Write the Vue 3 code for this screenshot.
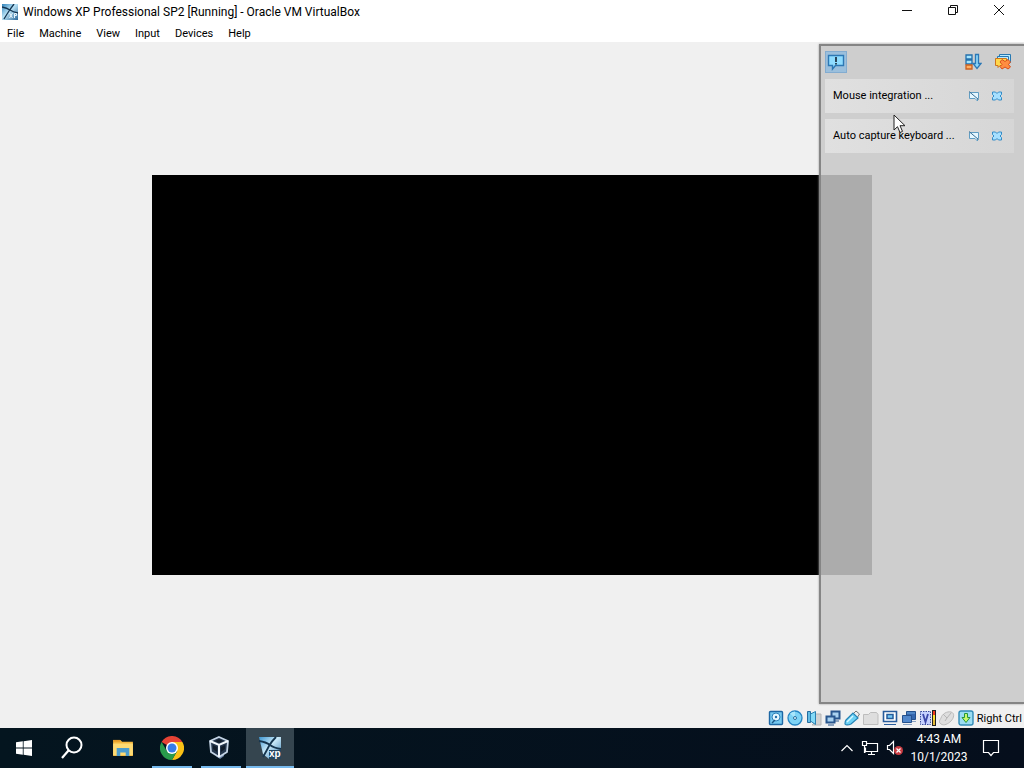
<script setup>
const menus = ['File', 'Machine', 'View', 'Input', 'Devices', 'Help']
const messages = ['Mouse integration ...', 'Auto capture keyboard ...']
</script>

<template>
  <div class="desktop">
    <header class="titlebar">
      <svg class="app-icon" viewBox="0 0 16 16" aria-hidden="true">
        <defs>
          <linearGradient id="tg" x1="0" y1="0" x2="1" y2="1">
            <stop offset="0" stop-color="#2f82bb" /><stop offset=".45" stop-color="#b9e2f5" /><stop offset="1" stop-color="#2a6698" />
          </linearGradient>
        </defs>
        <rect width="16" height="16" fill="url(#tg)" />
        <path d="M0 3Q5 4 8 6T16 9M12 0Q9 4 7 7T2 15" stroke="#12324f" stroke-width="1.300" fill="none" />
        <path d="M7.500 9l3 5M10.500 9l-3 5M12.500 14V9.500h2v2h-2" stroke="#e8f4fc" fill="none" />
      </svg>
      <h1>Windows XP Professional SP2 [Running] - Oracle VM VirtualBox</h1>
      <div class="window-buttons">
        <button aria-label="Minimize"><svg viewBox="0 0 12 12"><path d="M1 6.500h10" /></svg></button>
        <button aria-label="Restore"><svg viewBox="0 0 12 12"><path d="M1.500 3.500h7v7h-7zM3.500 3.500v-2h7v7h-2" /></svg></button>
        <button aria-label="Close"><svg viewBox="0 0 12 12"><path d="M1 1l10 10M11 1L1 11" /></svg></button>
      </div>
    </header>
    <nav class="menubar">
      <button v-for="m in menus" :key="m">{{ m }}</button>
    </nav>

    <main class="stage">
      <div class="guest-screen"></div>
      <aside class="panel">
        <div class="panel-tools">
          <button class="toggle" aria-label="Notifications">
            <svg width="18" height="18" viewBox="0 0 18 18">
              <path d="M1.500 2.500h15v10H8.500l-3 3.500v-3.500h-4z" fill="#8fdcff" stroke="#2d78b4" stroke-width="1.400" />
              <path d="M9 4v5M9 10v1.500" stroke="#123" stroke-width="1.600" />
            </svg>
          </button>
          <button class="tool" aria-label="Sort">
            <svg width="18" height="18" viewBox="0 0 18 18">
              <path d="M2 2h6v4H2zM2 7h6v4H2z" fill="#a5e6ff" stroke="#2470ac" stroke-width="1.300" />
              <path d="M2 12h6v4H2z" fill="#ffb062" stroke="#cc6020" stroke-width="1.300" />
              <path d="M11.500 1.500h3v9h2.500l-4 5-4-5h2.500z" fill="#8ed8fa" stroke="#2b78b6" stroke-width="1.300" />
            </svg>
          </button>
          <button class="tool" aria-label="Delete all">
            <svg width="18" height="18" viewBox="0 0 18 18">
              <path d="M5.500 5V1.500h11v8h-2" fill="#b7eaff" stroke="#2778b1" />
              <path d="M3.500 6V3.500h11v8h-2" fill="#b7eaff" stroke="#2778b1" />
              <path d="M1.500 5.500h11v7H6l-2 2v-2H1.500z" fill="#ffd84c" stroke="#cf741b" />
              <path d="M8 6.500l3 2 3-2 2.500 2.500-2 2.500 2 2.500L14 16l-3-2-3 2-2-2.500 2-2-2-2.500z" fill="#ff8d41" stroke="#d9501b" />
            </svg>
          </button>
        </div>
        <ul class="messages">
          <li v-for="m in messages" :key="m">
            <span>{{ m }}</span>
            <button :aria-label="'Mute ' + m">
              <svg width="12" height="12" viewBox="0 0 12 12">
                <path d="M1.500 2.500h9v6h-1v2.500L7 8.500H1.500z" fill="#e4f6ff" stroke="#5f9cc2" />
                <path d="M1 1.500l9.500 8" stroke="#386f95" />
              </svg>
            </button>
            <button :aria-label="'Close ' + m">
              <svg width="12" height="12" viewBox="0 0 12 12">
                <path d="M1.500 2h3L6 3.500 7.500 2h3v2.500L9 6l1.500 1.500V10h-3L6 8.500 4.500 10h-3V7.500L3 6 1.500 4.500z" fill="#a6e0ff" stroke="#348cc7" />
              </svg>
            </button>
          </li>
        </ul>
      </aside>
      <svg class="pointer" width="13" height="20" viewBox="0 0 13 20" aria-hidden="true">
        <path d="M1 1v15l3.500-3.300L7 18.500l2.500-1.100L7 11.700h5z" fill="#fff" stroke="#222" />
      </svg>
    </main>

    <footer class="statusbar">
      <svg viewBox="0 0 16 16">
        <rect x="1.500" y="1.500" width="13" height="13" rx="1" fill="#75c9f0" stroke="#1d67a4" stroke-width="1.400" />
        <circle cx="8" cy="7" r="4" fill="#e5f8ff" stroke="#2f83bb" /><circle cx="8" cy="7" r="1.200" fill="#246fa9" />
        <path d="M4 13l3-3" stroke="#195787" stroke-width="1.500" />
      </svg>
      <svg viewBox="0 0 16 16">
        <circle cx="8" cy="8" r="7" fill="#7dd3f5" stroke="#2484c2" stroke-width="1.300" /><path d="M8 8L3 3.500A7 7 0 0 1 8 1.500z" fill="#a8e6fb" />
        <circle cx="8" cy="8" r="1.500" fill="#e8f9ff" stroke="#266f9f" />
      </svg>
      <svg viewBox="0 0 16 16">
        <path d="M9 4h6v11H6l3-3z" fill="#d2d2d2" stroke="#b6b6b6" />
        <path d="M1.500 1.500h3v11h-3z" fill="#62bce4" stroke="#246c9f" /><path d="M4.500 4l5-2.500v13l-5-3.500z" fill="#84daf7" stroke="#2a80b1" />
      </svg>
      <svg viewBox="0 0 16 16">
        <path d="M6.500 1.500h8v7h-8z" fill="#a9d2f0" stroke="#28568e" stroke-width="2" /><path d="M9 11h5" stroke="#28568e" />
        <path d="M1.500 6.500h8v6h-8z" fill="#a9d2f0" stroke="#28568e" stroke-width="2" /><path d="M3 15h6" stroke="#28568e" />
      </svg>
      <svg viewBox="0 0 16 16">
        <path d="M9 4l3-3 3.500 3L13 8z" fill="#eee" stroke="#777" />
        <path d="M2 10l7-7 5 5-7 6C4 15.500 1 15 1 14s0-3 1-4z" fill="#6bd0f4" stroke="#2583b5" stroke-width="1.200" /><path d="M3 12l6-6" stroke="#d6f7ff" stroke-width="1.500" />
      </svg>
      <svg viewBox="0 0 16 16"><path d="M.5 4.500h5l2-2h6l1.500 2v10H.5z" fill="#dedede" stroke="#bdbdbd" /></svg>
      <svg viewBox="0 0 16 16">
        <path d="M1.500 1.500h13v10h-13z" fill="#fff" stroke="#285c9c" stroke-width="1.600" /><path d="M5 4.500h6v4H5z" fill="#77c8f3" stroke="#245b9b" stroke-width="1.500" /><path d="M2 14.500h12" stroke="#285c9c" />
      </svg>
      <svg viewBox="0 0 16 16">
        <path d="M5.500 1.500h9v8h-9z" fill="#3567ae" stroke="#24508c" /><path d="M1.500 5.500h9v7h-9z" fill="#5187cb" stroke="#24508c" /><path d="M2 14.500h9M11 11.500h4" stroke="#8aa2c1" /><path d="M6 3h8" stroke="#6da8df" />
      </svg>
      <svg viewBox="0 0 16 16">
        <path d="M.5 1.500h10v13H.5z" fill="#c5d1ff" stroke="#394d9e" stroke-dasharray="1.500 1" /><path d="M3 4l2.500 8L8 4" stroke="#3b47a8" stroke-width="1.800" fill="none" />
        <path d="M12 0h4v16h-4z" fill="#222" /><path d="M13 1h2v4h-2z" fill="#f23a20" /><path d="M13 5h2v5h-2z" fill="#ffe22e" /><path d="M13 10h2v5h-2z" fill="#e2ba38" />
      </svg>
      <svg viewBox="0 0 16 16">
        <path d="M2 8c1-4 6-7 10-6 4 1 3 6 0 9s-7 5-10 3-1-4 0-6z" fill="#dedede" stroke="#bbb" /><path d="M4 4l4 4 4-5M8 8l-2 3" stroke="#b5b5b5" fill="none" />
      </svg>
      <svg viewBox="0 0 16 16">
        <rect x="1" y="1" width="14" height="14" rx="2" fill="#9bdcf2" stroke="#328ab6" stroke-width="1.400" /><path d="M6.500 3.500h3v4H12l-4 5-4-5h2.500z" fill="#c9f76a" stroke="#24963a" />
      </svg>
      <span>Right Ctrl</span>
    </footer>

    <div class="taskbar">
      <button class="task" aria-label="Start">
        <svg width="16" height="16" viewBox="0 0 16 16"><path d="M0 2.300L6.800 1.300v6.200H0zM7.600 1.200L16 0v7.500H7.600zM0 8.400h6.800v6.300L0 13.700zM7.600 8.400H16V16l-8.400-1.200z" fill="#fff" /></svg>
      </button>
      <button class="task" aria-label="Search">
        <svg width="24" height="24" viewBox="0 0 24 24"><circle cx="14" cy="9" r="7.500" fill="none" stroke="#fff" stroke-width="2" /><path d="M8.500 14.500L2 22" stroke="#fff" stroke-width="2.200" /></svg>
      </button>
      <button class="task explorer" aria-label="File Explorer">
        <svg width="22" height="18" viewBox="0 0 24 20"><path d="M1 1h8l2 2h12v16H1z" fill="#f5b83e" /><path d="M1 5h22v13H1z" fill="#ffdb73" /><path d="M5 10h14v9h-4v-4H9v4H5z" fill="#4d9dce" /><path d="M1 1h8v2H1z" fill="#e49a27" /></svg>
      </button>
      <button class="task open" aria-label="Chrome">
        <svg width="24" height="24" viewBox="0 0 24 24">
          <path d="M12 12L1.600 6A12 12 0 0 1 22.400 6z" fill="#e64335" /><path d="M12 12V6h10.400A12 12 0 0 1 12 24l5.200-9z" fill="#fbc116" /><path d="M12 12l5.200 3L12 24A12 12 0 0 1 1.600 6l5.200 9z" fill="#299b4b" />
          <circle cx="12" cy="12" r="6" fill="#fff" /><circle cx="12" cy="12" r="4.500" fill="#367ce8" />
        </svg>
      </button>
      <button class="task open" aria-label="VirtualBox">
        <svg width="24" height="24" viewBox="0 0 24 24">
          <path d="M7 17v3l4 3 4-3v-3z" fill="#6d86a8" />
          <path d="M10 1l9 4-1 11-8 5-8-5L1 5z" fill="#24364c" stroke="#c5d5e6" stroke-width="1.800" /><path d="M1 5l9 4 9-4M10 9v12" stroke="#f1f7fc" stroke-width="2" fill="none" /><path d="M4 9l4 2v5l-4-3zM16 9l-4 2v5l4-3z" fill="#101c2a" /><path d="M6 5l4-2 4 2-4 2z" fill="#101c2a" />
        </svg>
      </button>
      <button class="task open active" aria-label="Windows XP virtual machine">
        <svg width="24" height="24" viewBox="0 0 24 24">
          <defs><linearGradient id="xg" x1="0" y1="0" x2="1" y2="1"><stop offset="0" stop-color="#3c95d1" /><stop offset=".45" stop-color="#c9e9f8" /><stop offset="1" stop-color="#377bae" /></linearGradient></defs>
          <path d="M1 1h22v22H11L5 18z" fill="url(#xg)" /><path d="M1 5Q8 6 12 9T23 13M18 1Q13 6 11 10T5 21" stroke="#16364f" stroke-width="1.800" fill="none" />
          <path d="M11 14h12v9H11z" fill="#23455f" />
          <text x="11" y="21" class="xp">xp</text>
        </svg>
      </button>
      <div class="tray">
        <button aria-label="Show hidden icons"><svg width="14" height="12" viewBox="0 0 14 12"><path d="M1.500 9L7 3.500 12.500 9" /></svg></button>
        <button aria-label="Network"><svg width="18" height="16" viewBox="0 0 18 16"><path d="M5.500 3.500h11v8H4.500v-4M10.500 11.500v3M7 14.500h7M1.500 1.500h4v4h-4zM3.500 5.500v7h1" /></svg></button>
        <button aria-label="Volume muted"><svg width="17" height="16" viewBox="0 0 17 16"><path d="M1.500 5.500h2l4-4v12l-4-4h-2z" /><circle cx="12.500" cy="10.500" r="4.500" class="mute" /><path d="M10.500 8.500l4 4M14.500 8.500l-4 4" /></svg></button>
        <button class="clock"><span>4:43 AM</span><span>10/1/2023</span></button>
        <button aria-label="Action Center"><svg width="18" height="18" viewBox="0 0 18 18"><path d="M1.500 1.500h15v12h-5L9 16.500l-2.500-3h-5z" /></svg></button>
      </div>
    </div>
  </div>
</template>

<style>
body { margin: 0; }
</style>

<style scoped>
* { box-sizing: border-box; }
.desktop {
  display: flex;
  flex-direction: column;
  height: 100vh;
  overflow: hidden;
  background: #f0f0f0;
  color: #000;
  font-family: Roboto, sans-serif;
  font-size: 11px;
}
button {
  display: flex;
  align-items: center;
  justify-content: center;
  padding: 0;
  border: 0;
  background: none;
  color: inherit;
  font: inherit;
}
svg { display: block; flex: none; }
.titlebar { display: flex; align-items: center; height: 24px; padding-left: 2px; background: #fff; }
.app-icon { width: 16px; height: 16px; margin-right: 5px; }
h1 { margin: 0; font-size: 12px; font-weight: 400; line-height: 16px; white-space: nowrap; }
.window-buttons { display: flex; margin-left: auto; align-self: flex-start; padding-right: 2px; }
.window-buttons button { width: 46px; height: 20px; }
.window-buttons svg { width: 12px; height: 12px; fill: none; stroke: #111; }
.menubar { display: flex; gap: 15px; height: 18px; padding-left: 7px; background: #fff; }
.menubar button { height: 18px; }
.stage { position: relative; display: flex; flex: 1; min-height: 0; align-items: center; justify-content: center; }
.guest-screen { width: 100%; max-width: 720px; aspect-ratio: 9 / 5; background: #000; }
.panel {
  position: absolute;
  top: 2px;
  right: 0;
  bottom: 4px;
  width: 205px;
  padding: 5px 10px 0 4px;
  border: 2px solid #858585;
  border-right: 0;
  background: rgba(200, 200, 200, .86);
  background-clip: padding-box;
  box-shadow: 0 0 2px #999;
}
.panel-tools { display: flex; align-items: center; gap: 12px; height: 22px; padding-right: 2px; }
.panel-tools .toggle { width: 22px; height: 22px; margin-right: auto; border: 1px solid #83acd0; background: #9bbfdc; }
.messages { display: flex; flex-direction: column; gap: 6px; margin: 6px 0 0; padding: 0; list-style: none; }
.messages li { display: flex; align-items: center; gap: 11px; height: 34px; padding: 0 11px 0 8px; background: linear-gradient(90deg, #e0e0e0, #d6d6d6); line-height: 14px; white-space: nowrap; }
.messages span { flex: 1; min-width: 0; }
.pointer { position: absolute; top: 72px; right: 118px; }
.statusbar { display: flex; align-items: center; justify-content: flex-end; gap: 3px; height: 20px; padding-right: 2px; white-space: nowrap; }
.statusbar svg { width: 16px; height: 16px; fill: none; }
.taskbar { display: flex; height: 40px; background: linear-gradient(90deg, #04151f, #050e1c); color: #fff; font-size: 12px; }
.task { width: 48px; height: 40px; }
.task.explorer { margin-left: 3px; margin-right: 1px; }
.task.open { position: relative; margin-right: 1px; }
.task.open::after { content: ""; position: absolute; right: 4px; bottom: 0; left: 4px; height: 2px; background: #76b9ed; }
.task.active { background: #35454f; }
.task.active::after { right: 0; left: 0; }
.xp { fill: #fff; font: bold 10px "Liberation Sans", sans-serif; }
.tray { display: flex; align-items: center; margin-left: auto; padding-right: 24px; gap: 7px; }
.tray svg { fill: none; stroke: #fff; stroke-width: 1.2; }
.tray .mute { fill: #c93c42; stroke: none; }
.clock { flex-direction: column; width: 58px; line-height: 18px; margin: 0 7px 0 0; }
</style>
